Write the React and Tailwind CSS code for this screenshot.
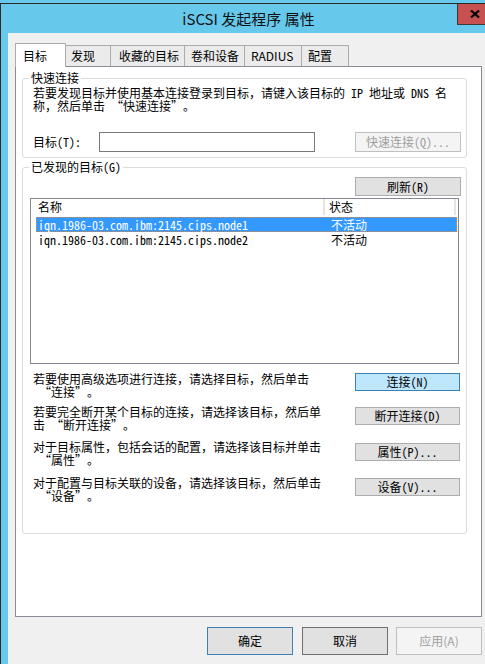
import React from 'react';

const sim = "font-['Noto_Sans_Mono_CJK_SC','Noto_Sans_CJK_SC',monospace]";
const yahei = "font-['Noto_Sans_CJK_SC','Noto_Sans',sans-serif]";

// full-width curly quotes, as the dialog's bitmap font draws them
const Quoted = ({ children }) => (
  <>
    <span className="pl-[6px]">“</span>
    {children}
    <span className="pr-[6px]">”</span>
  </>
);

const Tab = ({ width, pad, children }) => (
  <div className={`${width} ${pad} h-[21px] flex items-center bg-[#ebebeb] border-t border-r border-[#acacac] leading-[16px]`}>
    {children}
  </div>
);

const Btn = ({ className, children }) => (
  <div className={`flex items-center justify-center border leading-[14px] ${className}`}>{children}</div>
);

const TargetRow = ({ name, status, selected }) => (
  <div
    className={
      selected
        ? 'ml-[5px] w-[421px] h-[15px] flex items-center bg-[#3399ff] text-white border border-dotted border-[#e0883a] leading-[13px]'
        : 'ml-[5px] w-[421px] h-[15px] flex items-center border border-transparent leading-[13px]'
    }
  >
    <span className="w-[294px] pl-[1px]">{name}</span>
    <span>{status}</span>
  </div>
);

const ActionRow = ({ first, second, label, className, btnClass }) => (
  <div className={`flex items-start justify-between ${className}`}>
    <div>
      <div className="h-[13px] leading-[13px]">{first}</div>
      <div className="h-[13px] leading-[13px]">{second}</div>
    </div>
    <Btn className={`w-[105px] h-[18px] ${btnClass}`}>{label}</Btn>
  </div>
);

export default function App() {
  return (
    <div className="w-[485px] h-[664px] overflow-hidden bg-[#66c9ec] text-black text-[12px]">
      <div className="h-[3px] bg-[#66c9ec]" />
      <div className="h-[661px] border-l border-t border-[#2b2b2b] flex flex-col">
        {/* title bar */}
        <div className="h-[29px] shrink-0 flex items-center justify-center pl-[11px] relative">
          <span className={`${yahei} text-[15px] leading-[20px] text-[#111]`}>iSCSI 发起程序 属性</span>
          <div className="absolute left-[456px] top-0 w-[34px] h-[21px] bg-[#c75050] border-l border-b border-[#3b3b3b] flex items-center justify-center">
            <svg width="10" height="8" viewBox="0 0 10 8">
              <path d="M1 0.5 L9 7.5 M9 0.5 L1 7.5" stroke="#000" strokeWidth="2.2" />
            </svg>
          </div>
        </div>

        {/* dialog body */}
        <div className="flex-1 ml-[7px] bg-[#f0f0f0] pt-[10px] pl-[7px]">
          <div className={`flex items-end h-[23px] ${yahei}`}>
            <div className="relative z-10 -mb-px h-[24px] w-[51px] bg-white border-l border-t border-r border-[#acacac] flex items-center pl-[7px] leading-[16px]">
              目标
            </div>
            <Tab width="w-[45px]" pad="pl-[5px]">发现</Tab>
            <Tab width="w-[74px]" pad="pl-[8px]">收藏的目标</Tab>
            <Tab width="w-[60px]" pad="pl-[6px]">卷和设备</Tab>
            <Tab width="w-[57px]" pad="pl-[6px]">RADIUS</Tab>
            <Tab width="w-[47px]" pad="pl-[6px]">配置</Tab>
          </div>

          <div className={`w-[467px] h-[551px] border border-[#898c95] bg-white ${sim}`}>
            {/* quick connect */}
            <fieldset className="ml-[6px] mt-[3px] w-[445px] border border-[#dcdcdc] rounded-[3px] p-0">
              <legend className="ml-[6px] px-[2px] leading-[16px]">快速连接</legend>
              <div className="pl-[10px] pr-[5px] pb-[5px]">
                <div className="h-[13px] leading-[13px]">
                  若要发现目标并使用基本连接登录到目标，请键入该目标的 IP 地址或 DNS 名
                </div>
                <div className="h-[13px] leading-[13px]">
                  称，然后单击<Quoted>快速连接</Quoted>。
                </div>
                <div className="mt-[20px] flex items-center h-[20px]">
                  <span className="w-[66px]">目标(T):</span>
                  <div className="w-[216px] h-[20px] border border-[#7a7a7a] bg-white" />
                  <Btn className="ml-[40px] w-[106px] h-[20px] bg-[#f4f4f4] border-[#bfbfbf] text-[#a0a0a0]">
                    快速连接(Q)...
                  </Btn>
                </div>
              </div>
            </fieldset>

            {/* discovered targets */}
            <fieldset className="ml-[6px] mt-[1px] w-[445px] border border-[#dcdcdc] rounded-[3px] p-0">
              <legend className="ml-[6px] px-[2px] leading-[16px]">已发现的目标(G)</legend>
              <div className="pb-[31px]">
                <div className="mt-[2px] flex justify-end pr-[5px]">
                  <Btn className="w-[106px] h-[19px] bg-[#e1e1e1] border-[#adadad]">刷新(R)</Btn>
                </div>
                <div className="mt-[2px] ml-[7px] w-[429px] h-[166px] border border-[#828790] bg-white">
                  <div className="flex h-[16px] leading-[16px]">
                    <div className="w-[294px] pl-[7px] border-r-2 border-[#e5e5e5]">名称</div>
                    <div className="w-[131px] pl-[4px] border-r-2 border-[#e5e5e5]">状态</div>
                  </div>
                  <div className="mt-[2px]">
                    <TargetRow name="iqn.1986-03.com.ibm:2145.cips.node1" status="不活动" selected />
                    <TargetRow name="iqn.1986-03.com.ibm:2145.cips.node2" status="不活动" />
                  </div>
                </div>

                <div className="pl-[10px] pr-[6px]">
                  <ActionRow
                    className="mt-[8px]"
                    first="若要使用高级选项进行连接，请选择目标，然后单击"
                    second={<><Quoted>连接</Quoted>。</>}
                    label="连接(N)"
                    btnClass="mt-[1px] bg-[#bee6fd] border-[#3c7fb1]"
                  />
                  <ActionRow
                    className="mt-[7px]"
                    first="若要完全断开某个目标的连接，请选择该目标，然后单"
                    second={<>击<Quoted>断开连接</Quoted>。</>}
                    label="断开连接(D)"
                    btnClass="mt-[2px] bg-[#e1e1e1] border-[#adadad]"
                  />
                  <ActionRow
                    className="mt-[9px]"
                    first="对于目标属性，包括会话的配置，请选择该目标并单击"
                    second={<><Quoted>属性</Quoted>。</>}
                    label="属性(P)..."
                    btnClass="mt-[3px] bg-[#e1e1e1] border-[#adadad]"
                  />
                  <ActionRow
                    className="mt-[10px]"
                    first="对于配置与目标关联的设备，请选择该目标，然后单击"
                    second={<><Quoted>设备</Quoted>。</>}
                    label="设备(V)..."
                    btnClass="mt-[2px] bg-[#e1e1e1] border-[#adadad]"
                  />
                </div>
              </div>
            </fieldset>
          </div>

          <div className={`mt-[10px] w-[467px] flex justify-end ${yahei}`}>
            <Btn className="w-[86px] h-[28px] bg-[#e1e1e1] border-[#3c7fb1]">确定</Btn>
            <Btn className="ml-[9px] w-[86px] h-[28px] bg-[#e1e1e1] border-[#707070]">取消</Btn>
            <Btn className="ml-[8px] w-[86px] h-[28px] bg-[#f4f4f4] border-[#bfbfbf] text-[#a0a0a0]">应用(A)</Btn>
          </div>
        </div>
      </div>
    </div>
  );
}
